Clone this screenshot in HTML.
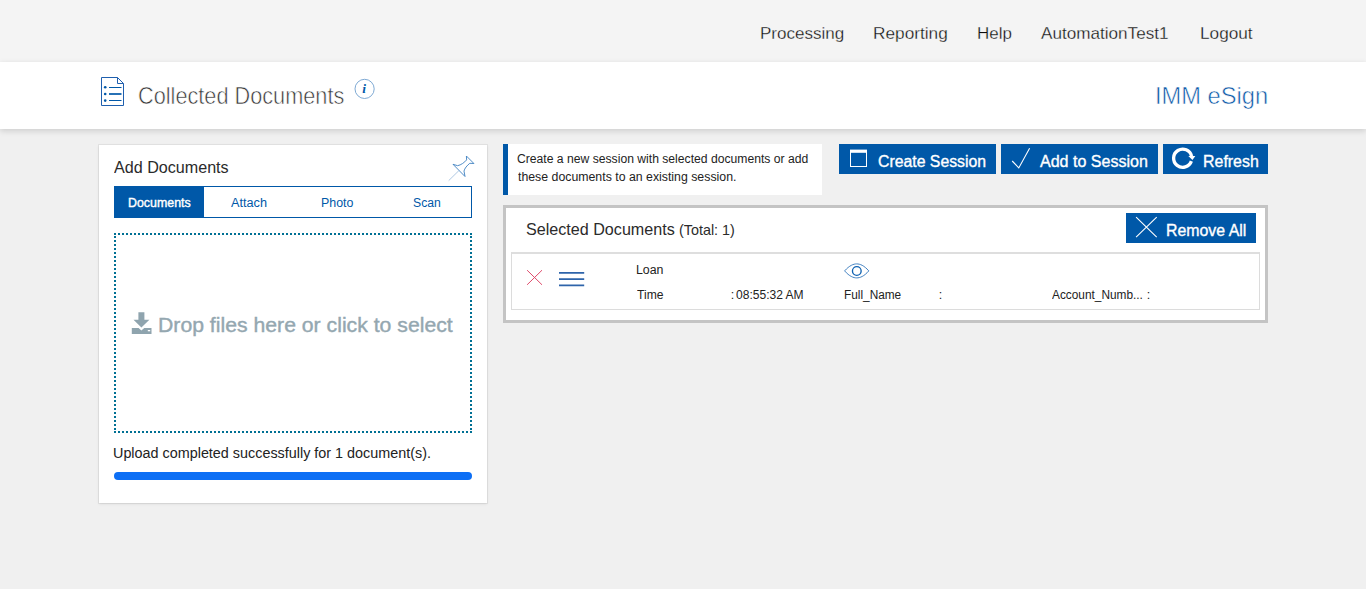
<!DOCTYPE html>
<html>
<head>
<meta charset="utf-8">
<title>Collected Documents</title>
<style>
*{box-sizing:border-box;margin:0;padding:0}
html,body{width:1366px;height:589px;overflow:hidden}
body{background:#f0f0f0;font-family:"Liberation Sans",sans-serif;color:#222;position:relative}
.abs{position:absolute}
.t{position:absolute;white-space:nowrap;line-height:1;transform-origin:0 0}
svg{position:absolute;overflow:visible}
#nav{left:0;top:0;width:1366px;height:62px;background:#f4f4f4}
#hdr{left:0;top:62px;width:1366px;height:67px;background:#fff;box-shadow:0 2px 6px rgba(0,0,0,.15)}
#left{left:99px;top:145px;width:388px;height:358px;background:#fff;box-shadow:0 0 0 1px rgba(0,0,0,.055),0 1px 3px rgba(0,0,0,.09)}
#tabs{left:114px;top:186px;width:358px;height:32px;border:1px solid #0058a8;background:#fff}
#tabon{left:114px;top:186px;width:90px;height:32px;background:#0058a8}
#drop{left:114px;top:233px;width:358px;height:200px;border:2px dotted #007094;background:#fff}
#bar{left:114px;top:472.2px;width:358px;height:7.6px;border-radius:4px;background:#0d6ff5}
#note{left:503px;top:144px;width:319px;height:51px;background:#fff;border-left:5px solid #0058a8}
.btn{background:#0058a8;height:30px}
#sel{left:503px;top:205px;width:765px;height:118px;border:3px solid #c4c4c4;background:#fff}
#row{left:511px;top:252px;width:749px;height:58px;border:1px solid #dcdcdc;border-top:2px solid #dedede;background:#fff}
</style>
</head>
<body>
<div id="nav" class="abs"></div>
<div id="hdr" class="abs"></div>
<div id="left" class="abs"></div>
<div id="tabs" class="abs"></div>
<div id="tabon" class="abs"></div>
<div id="drop" class="abs"></div>
<div id="bar" class="abs"></div>
<div id="note" class="abs"></div>
<div class="abs btn" style="left:839px;top:144px;width:157px"></div>
<div class="abs btn" style="left:1001px;top:144px;width:157px"></div>
<div class="abs btn" style="left:1163px;top:144px;width:105px"></div>
<div id="sel" class="abs"></div>
<div class="abs btn" style="left:1126px;top:213px;width:130px"></div>
<div id="row" class="abs"></div>
<!--ICONS-START-->
<svg id="ico" width="1366" height="589" viewBox="0 0 1366 589" style="left:0;top:0" fill="none">
<!-- document icon -->
<g stroke="#1f5fae" stroke-width="1" stroke-linejoin="miter">
<path d="M101.5 77.5 H117.5 L123.5 83.5 V105.5 H101.5 Z"/>
<path d="M117.5 77.5 V83.5 H123.5"/>
</g>
<g stroke="#0058a8" stroke-width="1.2">
<path d="M109 87.5H121.5M109 100.5H121.5"/><path d="M109 94H121.5" stroke-width="1.7"/>
</g>
<g fill="#0058a8"><circle cx="105.2" cy="87.3" r="1.3"/><circle cx="105.2" cy="94" r="1.3"/><circle cx="105.2" cy="100.6" r="1.3"/></g>
<!-- info icon -->
<circle cx="364.6" cy="88.9" r="9.6" stroke="#6f9fce" stroke-width="0.9"/>
<text x="362.3" y="92.8" font-family="Liberation Serif" font-style="italic" font-weight="bold" font-size="13.5" fill="#0058a8">i</text>
<!-- pin icon -->
<g stroke="#3c7fc0" stroke-width="0.9" stroke-linejoin="miter">
<path d="M466.4 156 L473.9 163.5 L469.8 163.3 C467 165.5 464.5 168.5 464 171.1 L465 176.5 L453 164.3 L457.6 165.7 C461 165 464.5 162.5 466.6 159.9 Z"/>
<path d="M458.9 170.6 L448.7 180.6" stroke="#9bbbdc" stroke-width="0.8"/>
</g>
<!-- download icon -->
<g fill="#8fa4ae">
<path d="M138.4 312.2 H144.4 V319.7 H149.4 L141.4 327.6 L133.5 319.7 H138.4 Z"/>
<path d="M131.8 328 H138.6 L141.4 330.6 L144.2 328 H151.5 V333.9 H131.8 Z"/>
</g>
<rect x="147.8" y="330" width="2.4" height="1.3" fill="#fff"/>
<!-- window icon -->
<rect x="850.5" y="152" width="16" height="14.5" stroke="#fff" stroke-width="1"/>
<rect x="850" y="149.6" width="17" height="3" fill="#fff"/>
<!-- check icon -->
<path d="M1012.2 161 L1018.8 167.9 L1029.6 148.2" stroke="#fff" stroke-width="1.1"/>
<!-- refresh icon -->
<path d="M1191.35 161.1 A9.1 9.1 0 1 1 1191.6 156.2" stroke="#fff" stroke-width="3.3"/>
<path d="M1188.3 155.9 L1195.3 155.9 L1192.5 160.1 Z" fill="#fff"/>
<!-- remove all X -->
<path d="M1136.1 217.2 L1156.7 237.1 M1156.7 217.2 L1136.1 237.1" stroke="#fff" stroke-width="1.1"/>
<!-- red X -->
<path d="M527.1 270.2 L542 284.8 M542 270.2 L527.1 284.8" stroke="#df4b6b" stroke-width="1"/>
<!-- hamburger -->
<path d="M559 272.85H584.2M559 279.1H584.2M559 285.3H584.2" stroke="#2e64aa" stroke-width="1.8"/>
<!-- eye -->
<path d="M844.6 270.9 C849.5 265.4 853.5 263.9 856.7 263.9 C860 263.9 864 265.4 868.8 270.9 C864 276.4 860 277.9 856.7 277.9 C853.5 277.9 849.5 276.4 844.6 270.9 Z" stroke="#2f74ba" stroke-width="0.9"/>
<circle cx="856.8" cy="271" r="4.35" stroke="#0f62b2" stroke-width="1.35"/>
</svg>
<!--ICONS-END-->
<div class="t" id="n1" style="left:760.03px;top:25.00px;font-size:17px;transform:scaleX(1.0016);color:#0c0c0c;-webkit-text-stroke:0.3px #f4f4f4;">Processing</div>
<div class="t" id="n2" style="left:872.78px;top:25.00px;font-size:17px;transform:scaleX(1.0146);color:#0c0c0c;-webkit-text-stroke:0.3px #f4f4f4;">Reporting</div>
<div class="t" id="n3" style="left:976.65px;top:25.00px;font-size:17px;transform:scaleX(0.9967);color:#0c0c0c;-webkit-text-stroke:0.3px #f4f4f4;">Help</div>
<div class="t" id="n4" style="left:1040.80px;top:25.00px;font-size:17px;transform:scaleX(1.0071);color:#0c0c0c;-webkit-text-stroke:0.3px #f4f4f4;">AutomationTest1</div>
<div class="t" id="n5" style="left:1200.13px;top:25.00px;font-size:17px;transform:scaleX(1.0121);color:#0c0c0c;-webkit-text-stroke:0.3px #f4f4f4;">Logout</div>
<div class="t" id="title" style="left:137.84px;top:84.00px;font-size:24.5px;transform:scaleX(0.8858);color:#363636;-webkit-text-stroke:0.6px #fff;">Collected Documents</div>
<div class="t" id="brand" style="left:1155.24px;top:84.00px;font-size:24px;transform:scaleX(0.9861);color:#0f5aa8;-webkit-text-stroke:0.55px #fff;">IMM eSign</div>
<div class="t" id="addt" style="left:114.09px;top:159.00px;font-size:17px;transform:scaleX(0.9478);color:#2b2b2b;">Add Documents</div>
<div class="t" id="tab1" style="left:128.47px;top:197.00px;font-size:12.5px;transform:scaleX(0.9911);color:#fff;-webkit-text-stroke:0.4px #fff;">Documents</div>
<div class="t" id="tab2" style="left:231.47px;top:197.00px;font-size:12.5px;transform:scaleX(1.0153);color:#0058a8;">Attach</div>
<div class="t" id="tab3" style="left:321.25px;top:197.00px;font-size:12.5px;transform:scaleX(0.9935);color:#0058a8;">Photo</div>
<div class="t" id="tab4" style="left:412.93px;top:197.00px;font-size:12.5px;transform:scaleX(0.9749);color:#0058a8;">Scan</div>
<div class="t" id="droptx" style="left:157.86px;top:315.00px;font-size:20.5px;transform:scaleX(1.0346);color:#94a7b0;-webkit-text-stroke:0.4px #94a7b0;">Drop files here or click to select</div>
<div class="t" id="upl" style="left:113.27px;top:446.00px;font-size:14.0px;transform:scaleX(1.0266);color:#222;">Upload completed successfully for 1 document(s).</div>
<div class="t" id="note1" style="left:517.43px;top:153.00px;font-size:12.5px;transform:scaleX(0.9725);color:#222;">Create a new session with selected documents or add</div>
<div class="t" id="note2" style="left:518.00px;top:171.00px;font-size:12.5px;transform:scaleX(0.9853);color:#222;">these documents to an existing session.</div>
<div class="t" id="b1" style="left:878.00px;top:154.00px;font-size:16px;transform:scaleX(0.9879);color:#fff;-webkit-text-stroke:0.35px #fff;">Create Session</div>
<div class="t" id="b2" style="left:1040.39px;top:154.00px;font-size:16px;transform:scaleX(1.0027);color:#fff;-webkit-text-stroke:0.35px #fff;">Add to Session</div>
<div class="t" id="b3" style="left:1202.58px;top:154.00px;font-size:16px;transform:scaleX(0.9964);color:#fff;-webkit-text-stroke:0.35px #fff;">Refresh</div>
<div class="t" id="selt" style="left:525.57px;top:221.00px;font-size:17.0px;transform:scaleX(0.9484);color:#2b2b2b;">Selected Documents</div>
<div class="t" id="tot" style="left:678.83px;top:223.00px;font-size:14.5px;transform:scaleX(0.9900);color:#2b2b2b;">(Total: 1)</div>
<div class="t" id="b4" style="left:1165.98px;top:223.00px;font-size:16px;transform:scaleX(0.9922);color:#fff;-webkit-text-stroke:0.35px #fff;">Remove All</div>
<div class="t" id="r1" style="left:636.10px;top:264.00px;font-size:12.5px;transform:scaleX(0.9878);color:#222;">Loan</div>
<div class="t" id="r2" style="left:637.26px;top:289.00px;font-size:12.5px;transform:scaleX(0.9693);color:#222;">Time</div>
<div class="t" id="r3" style="left:730.85px;top:289.00px;font-size:12.5px;transform:scaleX(1.0000);color:#222;">:</div>
<div class="t" id="r4" style="left:736.06px;top:289.00px;font-size:12.5px;transform:scaleX(0.9638);color:#222;">08:55:32 AM</div>
<div class="t" id="r5" style="left:844.22px;top:289.00px;font-size:12.5px;transform:scaleX(0.9460);color:#222;">Full_Name</div>
<div class="t" id="r6" style="left:938.63px;top:289.00px;font-size:12.5px;transform:scaleX(1.0000);color:#222;">:</div>
<div class="t" id="r7" style="left:1052.14px;top:289.00px;font-size:12.5px;transform:scaleX(0.9481);color:#222;">Account_Numb...</div>
<div class="t" id="r8" style="left:1146.63px;top:289.00px;font-size:12.5px;transform:scaleX(1.0000);color:#222;">:</div>
</body>
</html>
